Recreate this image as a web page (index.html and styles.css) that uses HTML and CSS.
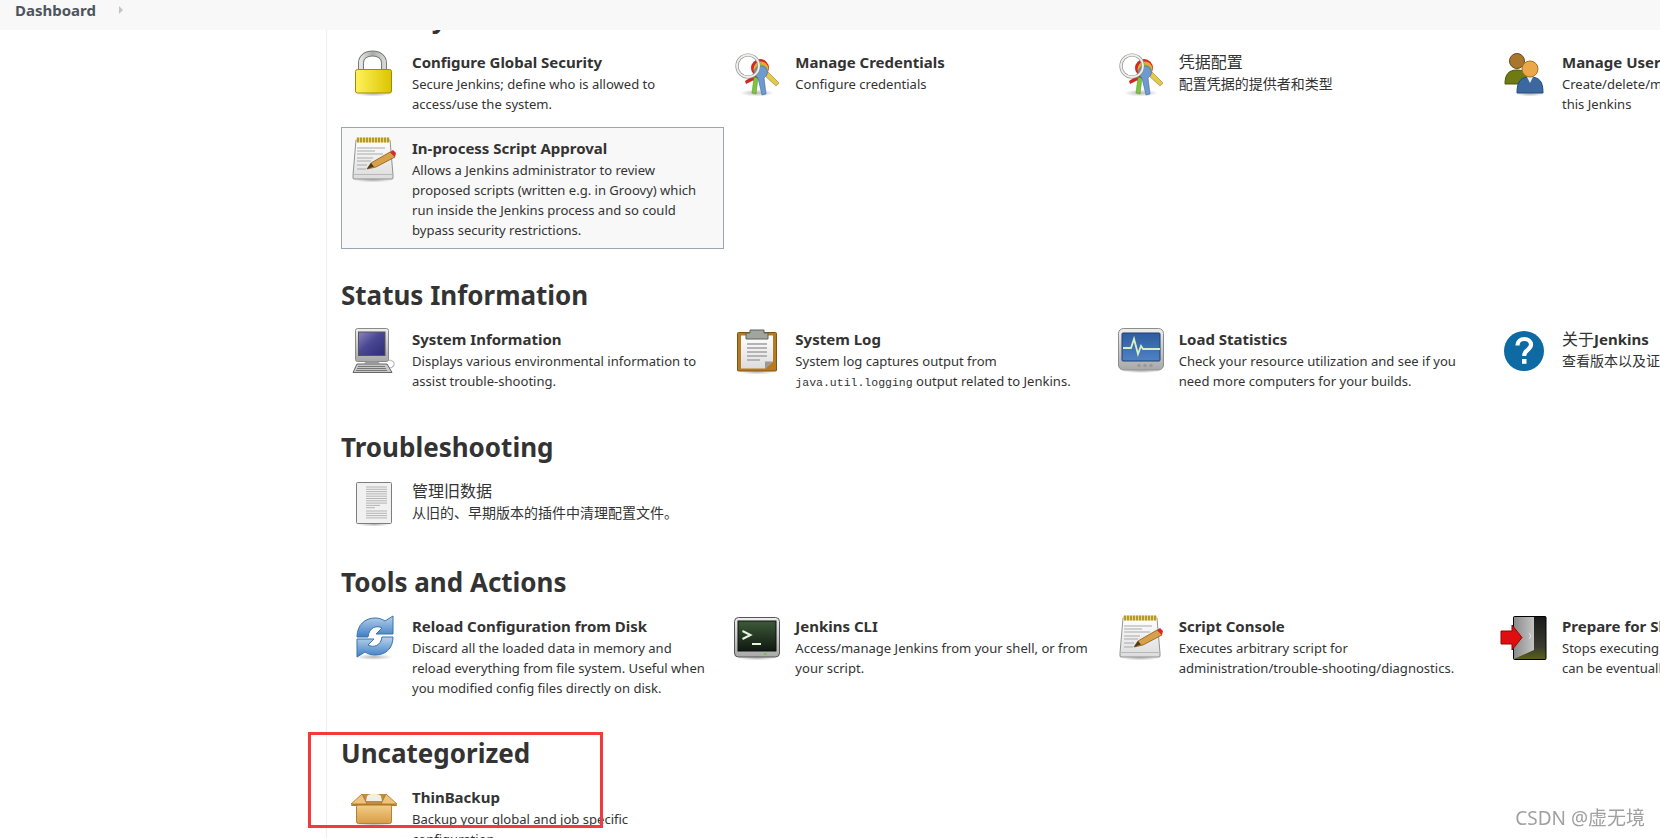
FILE: index.html
```html
<!DOCTYPE html>
<html lang="en">
<head>
    <meta charset="UTF-8">
    <meta name="viewport" content="width=device-width, initial-scale=1.0">
    <title>Manage Jenkins</title>
    <link rel="stylesheet" href="styles.css">
</head>
<body>
    <svg class="svg-defs" aria-hidden="true">
        <defs>
            <linearGradient id="gLock" x1="0" y1="0" x2="1" y2="0"><stop offset="0" stop-color="#fff25a"/><stop offset="1" stop-color="#dcc400"/></linearGradient>
            <linearGradient id="gSteel" x1="0" y1="0" x2="1" y2="0"><stop offset="0" stop-color="#e4e6e2"/><stop offset="0.5" stop-color="#a9aca6"/><stop offset="1" stop-color="#d3d5d0"/></linearGradient>
            <linearGradient id="gPaper" x1="0" y1="0" x2="0" y2="1"><stop offset="0" stop-color="#ffffff"/><stop offset="1" stop-color="#dcdcdc"/></linearGradient>
            <linearGradient id="gScreen" x1="0" y1="0" x2="1" y2="1"><stop offset="0" stop-color="#8a86c0"/><stop offset="0.45" stop-color="#4a4793"/><stop offset="1" stop-color="#2f2c74"/></linearGradient>
            <linearGradient id="gLoad" x1="0" y1="0" x2="0" y2="1"><stop offset="0" stop-color="#2e5c9e"/><stop offset="1" stop-color="#4f82c4"/></linearGradient>
            <linearGradient id="gCase" x1="0" y1="0" x2="0" y2="1"><stop offset="0" stop-color="#eeeeee"/><stop offset="1" stop-color="#a8a8a8"/></linearGradient>
            <linearGradient id="gBlue" x1="0" y1="0" x2="0" y2="1"><stop offset="0" stop-color="#b9d2ec"/><stop offset="1" stop-color="#3d7fc4"/></linearGradient>
            <linearGradient id="gTerm" x1="0" y1="0" x2="0" y2="1"><stop offset="0" stop-color="#3c5a38"/><stop offset="1" stop-color="#101810"/></linearGradient>
            <linearGradient id="gDoor" x1="0" y1="0" x2="1" y2="0"><stop offset="0" stop-color="#8c8c8c"/><stop offset="1" stop-color="#c4c4c4"/></linearGradient>
            <linearGradient id="gDark" x1="0" y1="0" x2="0" y2="1"><stop offset="0" stop-color="#1a1a1a"/><stop offset="0.7" stop-color="#3a3a30"/><stop offset="1" stop-color="#5a6018"/></linearGradient>
            <linearGradient id="gBox" x1="0" y1="0" x2="0" y2="1"><stop offset="0" stop-color="#f2cf8c"/><stop offset="1" stop-color="#d99c45"/></linearGradient>
            <radialGradient id="gShadow"><stop offset="0" stop-color="#000" stop-opacity="0.28"/><stop offset="1" stop-color="#000" stop-opacity="0"/></radialGradient>

            <symbol id="iconNote" viewBox="0 0 48 48">
                <ellipse cx="23" cy="44" rx="20" ry="2.500" fill="url(#gShadow)"/>
                <path d="M6 4h34l3 35v3a1 1 0 0 1-1 1H4a1 1 0 0 1-1-1v-3z" fill="url(#gPaper)" stroke="#77787a" stroke-width="0.8"/>
                <path d="M3 38h40v1H3z" fill="#b8b8b8"/>
                <path d="M6.500 1.500h33v5h-33z" fill="#f0d873"/>
                <path d="M8 1.500v5M11 1.500v5M14 1.500v5M17 1.500v5M20 1.500v5M23 1.500v5M26 1.500v5M29 1.500v5M32 1.500v5M35 1.500v5M38 1.500v5" stroke="#87700c" stroke-width="1.2"/>
                <path d="M7 12h28M7 15h18M7 18h26M7 22h16M7 25h14M7 29h10M7 33h9" stroke="#a9a9a9" stroke-width="1"/>
                <path d="M17 33l4-6 19-11 5 5-19 10z" fill="#d9a04a" stroke="#8a5a1b" stroke-width="0.8"/>
                <path d="M17 33l4-6 3 3.500z" fill="#4a3a20"/>
                <path d="M40 16l3-2 3 3-1 4z" fill="#d92a2a"/>
            </symbol>
            <symbol id="iconKeys" viewBox="0 0 48 48">
                <ellipse cx="24" cy="43" rx="17" ry="3.500" fill="url(#gShadow)"/>
                <path d="M33 20l13 13-3 3-13-12z" fill="#e6c84c" stroke="#9a8220" stroke-width="0.6"/>
                <circle cx="27" cy="18" r="9" fill="#d02a22"/>
                <circle cx="28" cy="19" r="7.500" fill="#eaa63a"/>
                <circle cx="28" cy="21" r="6.500" fill="#82c440"/>
                <path d="M23 24l-11 7 1 3 12-6z" fill="#d3261f"/>
                <path d="M21 27l4 1-2 16-4-1z" fill="#7dc53d" stroke="#4c8c20" stroke-width="0.5"/>
                <path d="M25 28c-3-2-4-5-3-8 1-3 4-4 6-4s5 1 6 4c1 3 0 6-3 8l2 16-4 1z" fill="#6d9ad1" stroke="#3f6698" stroke-width="0.6"/>
                <circle cx="15" cy="16" r="11" fill="none" stroke="#8e908c" stroke-width="3.200"/>
                <circle cx="15" cy="16" r="11" fill="none" stroke="#eceeea" stroke-width="1.800"/>
            </symbol>
        </defs>
    </svg>

    <header class="topbar">
        <span class="crumb">Dashboard</span>
        <span class="crumb-arrow"></span>
    </header>

    <div class="layout">
        <aside class="side"></aside>
        <main class="content">
            <section class="group">
                <h2>Security</h2>
                <div class="cards">
                    <a class="card">
                        <svg class="icon" viewBox="0 0 48 48">
                            <ellipse cx="23.500" cy="44" rx="18" ry="2.500" fill="url(#gShadow)"/>
                            <path d="M11 20v-7c0-6 5-9.500 11.500-9.500S34 7 34 13v7" fill="none" stroke="#777b77" stroke-width="6"/>
                            <path d="M11 20v-7c0-6 5-9.500 11.500-9.500S34 7 34 13v7" fill="none" stroke="url(#gSteel)" stroke-width="4"/>
                            <rect x="5.500" y="19.500" width="36" height="23.500" rx="2" fill="url(#gLock)" stroke="#9c8a10"/>
                        </svg>
                        <div class="text">
                            <h3>Configure Global Security</h3>
                            <p>Secure Jenkins; define who is allowed to access/use the system.</p>
                        </div>
                    </a>
                    <a class="card">
                        <svg class="icon"><use href="#iconKeys"/></svg>
                        <div class="text">
                            <h3>Manage Credentials</h3>
                            <p>Configure credentials</p>
                        </div>
                    </a>
                    <a class="card">
                        <svg class="icon"><use href="#iconKeys"/></svg>
                        <div class="text">
                            <h3 class="zh">凭据配置</h3>
                            <p class="zh">配置凭据的提供者和类型</p>
                        </div>
                    </a>
                    <a class="card">
                        <svg class="icon" viewBox="0 0 48 48">
                            <ellipse cx="30" cy="44" rx="14" ry="2.500" fill="url(#gShadow)"/>
                            <circle cx="17" cy="11" r="7.500" fill="#a8762c" stroke="#6b4a18"/>
                            <path d="M5 34c0-9 3-14 12-14s12 5 12 14z" fill="#6f7a12" stroke="#4c540b"/>
                            <path d="M17 43c0-11 3-16 13-16s13 5 13 16z" fill="#3a689f" stroke="#244a78"/>
                            <path d="M27 27h6l-3 6z" fill="#e8eef5"/>
                            <circle cx="30" cy="19" r="8" fill="#eba84a" stroke="#a96f1e"/>
                        </svg>
                        <div class="text">
                            <h3>Manage Users</h3>
                            <p>Create/delete/modify users that can log in to this Jenkins</p>
                        </div>
                    </a>
                    <a class="card active">
                        <svg class="icon"><use href="#iconNote"/></svg>
                        <div class="text">
                            <h3>In-process Script Approval</h3>
                            <p>Allows a Jenkins administrator to review proposed scripts (written e.g. in Groovy) which run inside the Jenkins process and so could bypass security restrictions.</p>
                        </div>
                    </a>
                </div>
            </section>

            <section class="group loose">
                <h2>Status Information</h2>
                <div class="cards">
                    <a class="card">
                        <svg class="icon" viewBox="0 0 48 48">
                            <path d="M37 33c5 0 8 2 7 5-1 2-3 3-5 3" fill="none" stroke="#b8b8b8" stroke-width="1.200"/>
                            <rect x="5.500" y="1.500" width="33" height="33" rx="2" fill="url(#gCase)" stroke="#8a8a8a"/>
                            <rect x="8.500" y="5" width="26.500" height="23.500" fill="url(#gScreen)" stroke="#555"/>
                            <path d="M16 34.500h12l2 2H14z" fill="#999"/>
                            <path d="M7 37h30l5 8.500H3z" fill="#c8c8c8" stroke="#666"/>
                            <path d="M8 39.500h27M7 41.500h29M6 43.500h31" stroke="#777" stroke-width="1"/>
                        </svg>
                        <div class="text">
                            <h3>System Information</h3>
                            <p>Displays various environmental information to assist trouble-shooting.</p>
                        </div>
                    </a>
                    <a class="card">
                        <svg class="icon" viewBox="0 0 48 48">
                            <ellipse cx="24" cy="45" rx="18" ry="2.500" fill="url(#gShadow)"/>
                            <rect x="4.500" y="5.500" width="39" height="38.500" rx="1" fill="#b67a22" stroke="#80530f"/>
                            <path d="M8 8.500h32v26l-8 7H8z" fill="url(#gPaper)"/>
                            <path d="M40 34.500l-8 7v-7z" fill="#999"/>
                            <path d="M17 3h14v3h4v6H13V6h4z" fill="#a2a59e" stroke="#5f625c"/>
                            <path d="M14 17h20M14 21h20M14 25h20M14 29h20M14 33h13" stroke="#b4b4b4" stroke-width="2"/>
                        </svg>
                        <div class="text">
                            <h3>System Log</h3>
                            <p>System log captures output from <code>java.util.logging</code> output related to Jenkins.</p>
                        </div>
                    </a>
                    <a class="card">
                        <svg class="icon" viewBox="0 0 48 48">
                            <ellipse cx="24" cy="44" rx="20" ry="2" fill="url(#gShadow)"/>
                            <rect x="1.500" y="1.500" width="45" height="41.500" rx="5" fill="url(#gCase)" stroke="#8c8c8c"/>
                            <rect x="5" y="6" width="38" height="28" rx="1" fill="url(#gLoad)" stroke="#1f3f70"/>
                            <path d="M6 21h8l3-9 4 15 3-8 2 3h17" fill="none" stroke="#d8f0c0" stroke-width="1.800"/>
                            <circle cx="22" cy="38.500" r="1.800" fill="#9a9a9a"/>
                            <circle cx="28" cy="38.500" r="1.800" fill="#9a9a9a"/>
                            <circle cx="34" cy="38.500" r="1.800" fill="#9a9a9a"/>
                        </svg>
                        <div class="text">
                            <h3>Load Statistics</h3>
                            <p>Check your resource utilization and see if you need more computers for your builds.</p>
                        </div>
                    </a>
                    <a class="card">
                        <svg class="icon" viewBox="0 0 48 48">
                            <circle cx="24" cy="24" r="20" fill="#0d6aa2"/>
                            <path d="M17.500 18.500c0-4 3-6.500 6.800-6.500s6.700 2.400 6.700 5.800c0 4.700-6.700 5.300-6.700 10.200v1" fill="none" stroke="#fff" stroke-width="4.200"/>
                            <rect x="22" y="32" width="4.500" height="4.800" fill="#fff"/>
                        </svg>
                        <div class="text">
                            <h3 class="zh">关于<b>Jenkins</b></h3>
                            <p class="zh">查看版本以及证书信息。</p>
                        </div>
                    </a>
                </div>
            </section>

            <section class="group tight">
                <h2>Troubleshooting</h2>
                <div class="cards">
                    <a class="card">
                        <svg class="icon" viewBox="0 0 48 48">
                            <ellipse cx="24" cy="45.500" rx="17" ry="2" fill="url(#gShadow)"/>
                            <rect x="6.500" y="3.500" width="35" height="41" rx="1" fill="#f1f1f1" stroke="#7d7d7d"/>
                            <path d="M16 8h21M16 10.300h21M16 12.600h21M16 14.900h21M16 17.200h21M16 19.500h21M16 21.800h21M16 24.100h21M16 26.400h14M16 28.700h9M16 32h21M16 34.300h21M16 36.600h21M16 38.900h21" stroke="#adadad" stroke-width="0.900"/>
                        </svg>
                        <div class="text">
                            <h3 class="zh">管理旧数据</h3>
                            <p class="zh">从旧的、早期版本的插件中清理配置文件。</p>
                        </div>
                    </a>
                </div>
            </section>

            <section class="group">
                <h2>Tools and Actions</h2>
                <div class="cards">
                    <a class="card">
                        <svg class="icon" viewBox="0 0 48 48">
                            <ellipse cx="24" cy="43" rx="19" ry="3" fill="url(#gShadow)"/>
                            <path d="M7 23C7 11 15 4 25 4c4 0 7 1 10 3l8-5v18H26l6-6c-5-3-13-1-14 9z" fill="url(#gBlue)" stroke="#3a72b0"/>
                            <path d="M43 23c0 12-8 18-18 18-4 0-7-1-10-3l-8 5V25h17l-6 6c5 3 13 1 14-8z" fill="url(#gBlue)" stroke="#3a72b0"/>
                        </svg>
                        <div class="text">
                            <h3>Reload Configuration from Disk</h3>
                            <p>Discard all the loaded data in memory and reload everything from file system. Useful when you modified config files directly on disk.</p>
                        </div>
                    </a>
                    <a class="card">
                        <svg class="icon" viewBox="0 0 48 48">
                            <ellipse cx="24" cy="44" rx="20" ry="2.500" fill="url(#gShadow)"/>
                            <rect x="1.500" y="3.500" width="45" height="39.500" rx="4" fill="url(#gCase)" stroke="#555"/>
                            <rect x="5" y="7" width="38" height="30" fill="url(#gTerm)" stroke="#111"/>
                            <path d="M9.500 17l8 4-8 4" fill="none" stroke="#e8f4e0" stroke-width="2"/>
                            <path d="M19 30h9" stroke="#e8f4e0" stroke-width="2"/>
                            <rect x="31" y="39" width="2.500" height="2" fill="#6fbf4a"/>
                        </svg>
                        <div class="text">
                            <h3>Jenkins CLI</h3>
                            <p>Access/manage Jenkins from your shell, or from your script.</p>
                        </div>
                    </a>
                    <a class="card">
                        <svg class="icon"><use href="#iconNote"/></svg>
                        <div class="text">
                            <h3>Script Console</h3>
                            <p>Executes arbitrary script for administration/trouble-shooting/diagnostics.</p>
                        </div>
                    </a>
                    <a class="card">
                        <svg class="icon" viewBox="0 0 48 48">
                            <rect x="13.500" y="2.500" width="32.500" height="43" rx="1" fill="url(#gDark)" stroke="#000"/>
                            <path d="M14 3h20v33L14 45z" fill="url(#gDoor)"/>
                            <path d="M29 19l2 3-2 3" fill="none" stroke="#e4e4e4"/>
                            <path d="M1 17h11v-6l10 12.500L12 36v-6H1z" fill="#e00f0f" stroke="#8c0606"/>
                        </svg>
                        <div class="text">
                            <h3>Prepare for Shutdown</h3>
                            <p>Stops executing new builds, so that the system can be eventually shut down safely.</p>
                        </div>
                    </a>
                </div>
            </section>

            <section class="group">
                <h2>Uncategorized</h2>
                <div class="cards">
                    <a class="card">
                        <svg class="icon" viewBox="0 0 48 48">
                            <ellipse cx="24" cy="40" rx="19" ry="2.500" fill="url(#gShadow)"/>
                            <path d="M12 9h24l11 12H1z" fill="#c08c3e"/>
                            <path d="M17 11c3-3 11-3 14 0l1 5H16z" fill="#f1eee4"/>
                            <path d="M12 9l5 10H1zM36 9l-5 10h16z" fill="#f0c378" stroke="#a9742a" stroke-width="0.800"/>
                            <rect x="6.500" y="19.500" width="35" height="19" rx="2" fill="url(#gBox)" stroke="#b5802f"/>
                            <path d="M1 20h46" stroke="#a9742a"/>
                        </svg>
                        <div class="text">
                            <h3>ThinBackup</h3>
                            <p>Backup your global and job specific configuration.</p>
                        </div>
                    </a>
                </div>
            </section>
        </main>
    </div>

    <div class="mark-box"></div>
    <div class="watermark">CSDN @虚无境</div>
</body>
</html>
```

FILE: styles.css
```css
* {
    box-sizing: border-box;
    margin: 0;
    padding: 0;
}

html, body {
    height: 100%;
    overflow: hidden;
}

body {
    background: #ffffff;
    color: #333333;
    font-family: "Noto Sans", "Noto Sans CJK SC", sans-serif;
    font-size: 13px;
}

.svg-defs {
    position: absolute;
    width: 0;
    height: 0;
}

.topbar {
    position: fixed;
    top: 0;
    left: 0;
    right: 0;
    z-index: 5;
    height: 30px;
    padding: 0 0 10px 15px;
    display: flex;
    align-items: center;
    background: #f8f8f8;
}

.crumb {
    color: #4d545d;
    font-size: 15px;
    font-weight: 700;
}

.crumb-arrow {
    margin-left: 23px;
    border-left: 4px solid #c4c4c4;
    border-top: 4px solid transparent;
    border-bottom: 4px solid transparent;
}

.layout {
    display: flex;
    min-height: 100%;
}

.side {
    flex: 0 0 326px;
}

.content {
    flex: 1;
    min-width: 0;
    padding-top: 1px;
    padding-left: 14px;
    border-left: 1px solid #eeeeee;
}

/* Разделы */
.group {
    margin-bottom: 29px;
}

.group.loose {
    margin-bottom: 30px;
}

.group.tight {
    margin-bottom: 28px;
}

.group h2 {
    height: 34px;
    margin-bottom: 6px;
    color: #333333;
    font-size: 26px;
    font-weight: 700;
    line-height: 34px;
    white-space: nowrap;
}

.cards {
    display: grid;
    grid-template-columns: repeat(4, 383.33px);
    row-gap: 4px;
}

.card {
    display: flex;
    gap: 14px;
    min-height: 67px;
    padding: 8px 8px 8px;
    border: 1px solid transparent;
}

.card.active {
    background: #f8f8f8;
    border-color: #9aa7b3;
}

.icon {
    flex: 0 0 48px;
    width: 48px;
    height: 48px;
}

.text {
    flex: 1;
    padding-right: 6px;
    padding-top: 1px;
}

.text h3 {
    height: 22px;
    margin-bottom: 1px;
    font-size: 15px;
    font-weight: 700;
    line-height: 22px;
    white-space: nowrap;
}

.text p {
    font-size: 13.05px;
    line-height: 20px;
}

.text h3.zh {
    font-size: 16px;
    font-weight: 400;
}

.text h3.zh b {
    font-size: 15px;
    font-weight: 700;
}

.text p.zh {
    font-size: 14px;
    white-space: nowrap;
}

.text code {
    font-family: "Liberation Mono", monospace;
    font-size: 11.5px;
    line-height: 1;
}

.mark-box {
    position: fixed;
    left: 308px;
    top: 732px;
    width: 295px;
    height: 96px;
    z-index: 6;
    border: 3px solid #f23a3a;
}

.watermark {
    position: fixed;
    right: 15px;
    top: 806px;
    z-index: 6;
    color: #a0a0a0;
    font-size: 19px;
    line-height: 24px;
}
```
